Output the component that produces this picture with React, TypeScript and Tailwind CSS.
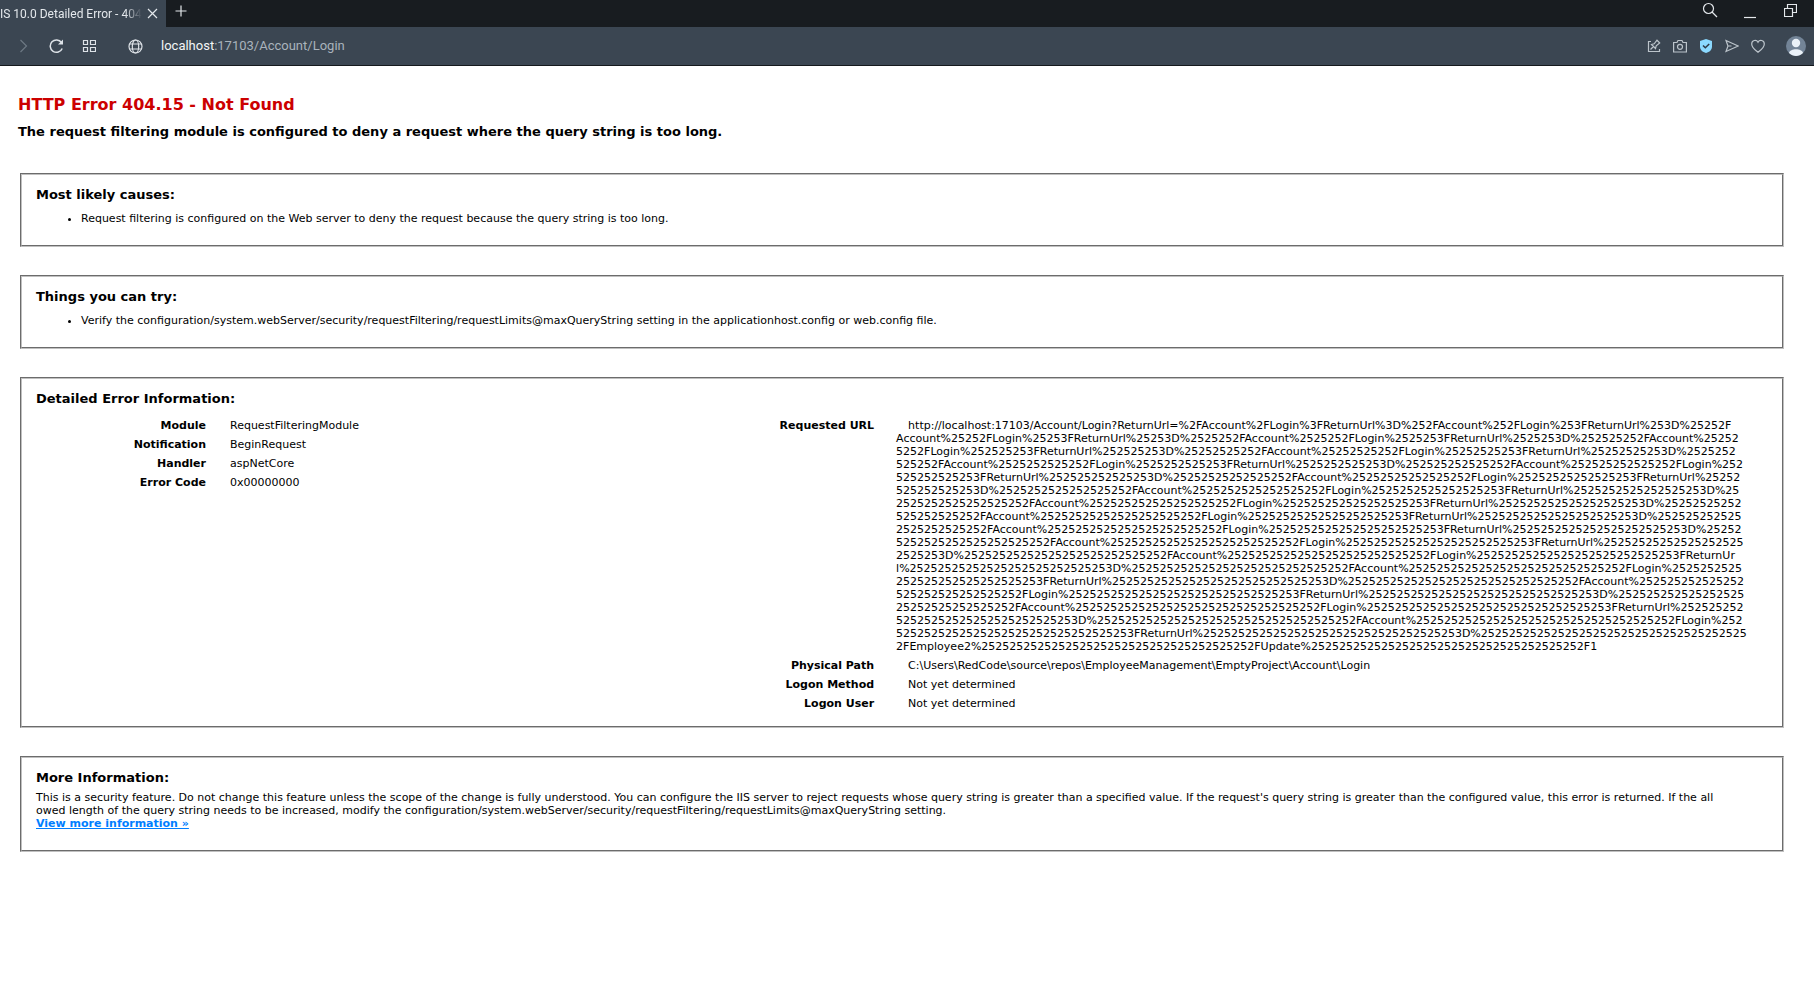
import { Fragment } from "react";
import type { ReactNode } from "react";

const returnPath = ["2FAccount", "2FLogin", "3FReturnUrl", "3D"];
const finalPath = ["2FEmployee2", "2FUpdate", "2F1"];

// [encoding level, path part, characters of that part carried to the next line]
const lineBreaks = [
  [2, 0, 7],
  [4, 1, 10],
  [6, 0, 14],
  [7, 2, 22],
  [8, 3, 13],
  [10, 0, 27],
  [11, 0, 20],
  [12, 0, 21],
  [13, 0, 30],
  [13, 3, 8],
  [14, 2, 1],
  [15, 2, 31],
  [16, 1, 24],
  [17, 0, 25],
  [17, 3, 27],
  [18, 2, 44],
  [19, 0, 11],
];

function buildUrlLines() {
  const lines = ["http://localhost:17103/Account/Login?ReturnUrl="];
  for (let level = 0; level <= 19; level++) {
    const parts = level === 19 ? finalPath : returnPath;
    parts.forEach((part, index) => {
      const text = "%" + "25".repeat(level) + part;
      const found = lineBreaks.find(([l, p]) => l === level && p === index);
      const cut = found ? text.length - found[2] : text.length;
      lines[lines.length - 1] += text.slice(0, cut);
      if (found) lines.push(text.slice(cut));
    });
  }
  return lines;
}

const moduleRows = [
  ["Module", "RequestFilteringModule"],
  ["Notification", "BeginRequest"],
  ["Handler", "aspNetCore"],
  ["Error Code", "0x00000000"],
];

const requestRows: [string, ReactNode][] = [
  [
    "Requested URL",
    buildUrlLines().map((line, index) => (
      <Fragment key={index}>
        {index > 0 && <br />}
        {line}
      </Fragment>
    )),
  ],
  ["Physical Path", "C:\\Users\\RedCode\\source\\repos\\EmployeeManagement\\EmptyProject\\Account\\Login"],
  ["Logon Method", "Not yet determined"],
  ["Logon User", "Not yet determined"],
];

function Icon({ size, children }: { size: number; children: ReactNode }) {
  return (
    <svg
      width={size}
      height={size}
      viewBox={`0 0 ${size} ${size}`}
      fill="none"
      stroke="currentColor"
      strokeWidth="1.2"
      className="block shrink-0"
      aria-hidden="true"
    >
      {children}
    </svg>
  );
}

function TabStrip() {
  return (
    <div className="flex h-[27px] items-stretch bg-[#181c20] text-[#e4e8ec]">
      <div className="flex w-[166px] shrink-0 items-center bg-[#3b4652] pr-1">
        <div className="flex-1 whitespace-nowrap text-[12px] leading-4 [mask-image:linear-gradient(to_right,black_88%,transparent)]">
          IS 10.0 Detailed Error - 404
        </div>
        <button aria-label="Close tab" className="flex h-5 w-5 shrink-0 items-center justify-center">
          <Icon size={11}><path d="M1 1l9 9M10 1l-9 9" /></Icon>
        </button>
      </div>
      <button aria-label="New tab" className="ml-[9px] flex w-3 items-center justify-center pb-1.5">
        <Icon size={12}><path d="M6 .5v11M.5 6h11" /></Icon>
      </button>
      <div className="ml-auto flex items-center pr-[17px]">
        <button aria-label="Search tabs" className="mr-[26px] pb-2">
          <Icon size={16}><circle cx="6.5" cy="6.5" r="5" /><path d="M10 10l5 5" /></Icon>
        </button>
        <button aria-label="Minimize" className="mr-7">
          <Icon size={12}><path d="M0 9.5h12" /></Icon>
        </button>
        <button aria-label="Restore" className="pb-1.5">
          <Icon size={13}><path d="M.5 4.500h8v8h-8zM3.500 4.500v-4h9v8h-4" /></Icon>
        </button>
      </div>
    </div>
  );
}

function AddressBar() {
  return (
    <div className="flex h-[39px] items-center border-b border-[#15191d] bg-[#3b4652] pl-[17px] pr-2 text-[#dde2e7]">
      <button aria-label="Forward" className="text-[#6d7984]">
        <Icon size={14}><path d="M3.500 1l6 6-6 6" /></Icon>
      </button>
      <button aria-label="Reload" className="ml-[18px]">
        <Icon size={15}><path d="M13.200 9.500A6.200 6.200 0 1 1 12.500 3.500" strokeWidth="1.500" /><path d="M9 5.500h5v-5z" fill="currentColor" stroke="none" /></Icon>
      </button>
      <button aria-label="Speed dial" className="ml-[18px]">
        <Icon size={14}><path d="M1.500 1.500h4v4h-4zM8.500 1.500h5v4h-5zM1.500 8.500h4v4h-4zM8.500 8.500h5v4h-5z" /></Icon>
      </button>
      <button aria-label="Site information" className="ml-8">
        <Icon size={15}><circle cx="7.500" cy="7.500" r="6.500" /><ellipse cx="7.500" cy="7.500" rx="3.200" ry="6.500" /><path d="M1.500 5h12M1.500 10h12" /></Icon>
      </button>
      <a href="#address" className="ml-[18px] text-[13px] leading-4 text-[#a9b3bc]">
        <span className="text-[#f3f5f7]">localhost</span>:17103/Account/Login
      </a>
      <div className="ml-auto flex items-center gap-3 text-[#bcc4cb]">
        <button aria-label="Pin page">
          <Icon size={14}><path d="M4 2.500H1.500v10h11V10M3.500 10.500l3-3M4.500 5.500l4 4 .7-2.700 3.500-2.800L10 1.200 7.200 4.800z" /></Icon>
        </button>
        <button aria-label="Snapshot">
          <Icon size={14}><path d="M.6 3.500H4l1-2h4l1 2h3.400v9.500H.6z" /><circle cx="7" cy="7.800" r="2.500" /></Icon>
        </button>
        <button aria-label="Tracker blocker" className="text-[#8bd9ff]">
          <Icon size={14}><path d="M7 0L13 2v5.500c0 3.500-2.500 5.500-6 6.500-3.500-1-6-3-6-6.500V2z" fill="currentColor" stroke="none" /><path d="M4 6.500l2.300 2.300L10.200 5" stroke="#2d3945" strokeWidth="1.500" /></Icon>
        </button>
        <button aria-label="Share">
          <Icon size={14}><path d="M1 1.500L13.200 7 1 12.500 3 7zM3 7h3.500" /></Icon>
        </button>
        <button aria-label="Bookmark">
          <Icon size={14}><path d="M7 13.300C4 10.700.7 8.500.7 4.900.7 1 5.500.3 7 3.200 8.500.3 13.300 1 13.300 4.900 13.300 8.500 10 10.700 7 13.300z" /></Icon>
        </button>
        <button aria-label="Profile" className="ml-[9px]">
          <svg width="20" height="20" viewBox="0 0 20 20" className="block" aria-hidden="true">
            <circle cx="10" cy="10" r="10" fill="#738497" />
            <circle cx="10" cy="7" r="4.200" fill="#eaf1f8" />
            <path d="M3 17c1-5 13-5 14 0-4 4-10 4-14 0z" fill="#eaf1f8" />
          </svg>
        </button>
      </div>
    </div>
  );
}

function Panel({ title, compact, children }: { title: string; compact?: boolean; children: ReactNode }) {
  return (
    <section
      className={`border-2 border-[#c0c0c0] px-[14px] pt-3 break-all [border-style:groove] ${compact ? "pb-[13px]" : "pb-5"}`}
    >
      <h3 className="text-[13px] leading-4 font-bold">{title}</h3>
      {children}
    </section>
  );
}

function Details({ rows, wide }: { rows: (string | ReactNode)[][]; wide?: boolean }) {
  return (
    <table className="w-full table-fixed">
      <tbody>
        {rows.map(([label, value]) => (
          <tr key={String(label)} className="align-top">
            <th scope="row" className={`py-[3px] text-right font-bold ${wide ? "w-[102px]" : "w-[170px]"}`}>
              {label}
            </th>
            <td className={`py-[3px] indent-3 ${wide ? "pl-[22px]" : "pl-3"}`}>{value}</td>
          </tr>
        ))}
      </tbody>
    </table>
  );
}

export default function App() {
  return (
    <div className="min-h-screen bg-white font-[Roboto,sans-serif]">
      <TabStrip />
      <AddressBar />
      <main className="pt-[29px] pr-[30px] pl-5 font-['DejaVu_Sans',sans-serif] text-[11px] leading-[13px] text-black">
        <div className="-ml-0.5 mb-8">
          <h1 className="text-[16px] leading-5 font-bold text-[#cc0000]">HTTP Error 404.15 - Not Found</h1>
          <h2 className="mt-2 text-[13px] leading-[18px] font-bold">
            The request filtering module is configured to deny a request where the query string is too long.
          </h2>
        </div>
        <div className="flex flex-col gap-7">
          <Panel title="Most likely causes:">
            <ul className="mt-[9px] list-disc pl-[45px]">
              <li>Request filtering is configured on the Web server to deny the request because the query string is too long.</li>
            </ul>
          </Panel>
          <Panel title="Things you can try:">
            <ul className="mt-[9px] list-disc pl-[45px]">
              <li>
                Verify the configuration/system.webServer/security/requestFiltering/requestLimits@maxQueryString setting in the
                applicationhost.config or web.config file.
              </li>
            </ul>
          </Panel>
          <Panel title="Detailed Error Information:" compact>
            <div className="mt-[9px] grid grid-cols-[42.500%_57.500%] items-start">
              <Details rows={moduleRows} />
              <Details rows={requestRows} wide />
            </div>
          </Panel>
          <Panel title="More Information:">
            <p className="mt-[5px]">
              This is a security feature. Do not change this feature unless the scope of the change is fully understood. You can
              configure the IIS server to reject requests whose query string is greater than a specified value. If the request's
              query string is greater than the configured value, this error is returned. If the all
              <br />
              owed length of the query string needs to be increased, modify the
              configuration/system.webServer/security/requestFiltering/requestLimits@maxQueryString setting.
            </p>
            <a href="#more" className="font-bold text-[#007eff] underline">View more information »</a>
          </Panel>
        </div>
      </main>
    </div>
  );
}
